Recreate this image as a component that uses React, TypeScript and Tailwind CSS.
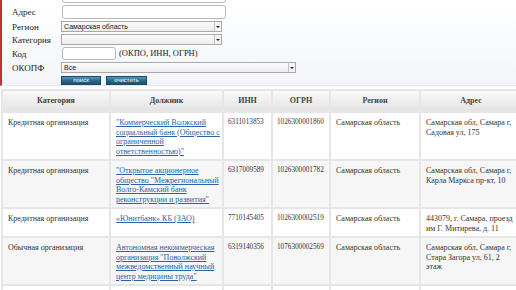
import React from "react";

const serif = "font-['Liberation_Serif','Times_New_Roman',serif]";
const sans = "font-['Liberation_Sans',Arial,sans-serif]";

function Select({ value, width }: { value?: string; width: string }) {
  return (
    <div
      className={`${width} h-[11px] flex items-stretch border border-[#a9a9a9] bg-gradient-to-b from-[#fbfbfb] to-[#ececec]`}
    >
      <div className={`flex-1 pl-[2px] text-[7px] leading-[9px] text-[#222] ${sans}`}>{value}</div>
      <div className="w-[7px] border-l border-[#c4c4c4] bg-[#f4f4f4] flex items-center justify-center">
        <div className="w-0 h-0 border-x-[2px] border-x-transparent border-t-[2px] border-t-[#222]" />
      </div>
    </div>
  );
}

function Label({ children }: { children: React.ReactNode }) {
  return (
    <div className={`w-[51px] pl-[10px] text-[9px] leading-[10px] text-[#222] ${serif}`}>{children}</div>
  );
}

function Button({ children, width }: { children: React.ReactNode; width: string }) {
  return (
    <div
      className={`${width} h-[9px] flex items-center justify-center bg-gradient-to-b from-[#5a97ba] via-[#2d6a8f] to-[#1b4f72] border border-[#1a4868] text-white text-[6px] leading-[6px] ${sans}`}
    >
      {children}
    </div>
  );
}

type Row = {
  cat: string;
  name: string[];
  inn: string;
  ogrn: string;
  region: string;
  addr: string[];
  gray: boolean;
};

const rows: Row[] = [
  {
    cat: "Кредитная организация",
    name: [
      "\"Коммерческий Волжский",
      "социальный банк (Общество с",
      "ограниченной",
      "ответственностью)\"",
    ],
    inn: "6311013853",
    ogrn: "1026300001860",
    region: "Самарская область",
    addr: ["Самарская обл, Самара г,", "Садовая ул, 175"],
    gray: false,
  },
  {
    cat: "Кредитная организация",
    name: [
      "\"Открытое акционерное",
      "общество \"Межрегиональный",
      "Волго-Камский банк",
      "реконструкции и развития\"",
    ],
    inn: "6317009589",
    ogrn: "1026300001782",
    region: "Самарская область",
    addr: ["Самарская обл, Самара г,", "Карла Маркса пр-кт, 10"],
    gray: true,
  },
  {
    cat: "Кредитная организация",
    name: ["«Юнитбанк» КБ (ЗАО)"],
    inn: "7710145405",
    ogrn: "1026300002519",
    region: "Самарская область",
    addr: ["443079, г. Самара, проезд", "им Г. Митирева, д. 11"],
    gray: false,
  },
  {
    cat: "Обычная организация",
    name: [
      "Автономная некоммерческая",
      "организация \"Поволжский",
      "межведомственный научный",
      "центр медицины труда\"",
    ],
    inn: "6319140356",
    ogrn: "1076300002569",
    region: "Самарская область",
    addr: ["Самарская обл, Самара г,", "Стара Загора ул, 61, 2", "этаж"],
    gray: true,
  },
];

const cell = "align-top border-2 border-[#e6e6e6] px-[5px] pt-[5px] pb-[3px]";
const num = "align-top border-2 border-[#e6e6e6] px-[4px] pt-[5px] pb-[3px] text-[7.2px] whitespace-nowrap";
const head =
  "h-[22px] border-2 border-[#e6e6e6] bg-gradient-to-b from-[#f9f9f9] to-[#e3e3e3] text-center font-bold text-[#444]";

export default function App() {
  return (
    <div className="w-[516px] h-[290px] overflow-hidden bg-white">
      <div className="border-l-2 border-[#c83030] bg-gradient-to-b from-white to-[#f2f5f9] border-b border-b-[#e4e8ee] h-[86px] overflow-hidden">
        <div className="flex flex-col gap-[2px] mt-[-11px]">
          <div className="flex items-center h-[14px]">
            <Label>{""}</Label>
            <div className="ml-[9px] w-[164px] h-[14px] rounded-[3px] border border-[#b9b9b9] bg-white" />
          </div>
          <div className="flex items-center h-[14px]">
            <Label>Адрес</Label>
            <div className="ml-[9px] w-[164px] h-[14px] rounded-[3px] border border-[#b9b9b9] bg-white" />
          </div>
          <div className="flex items-center h-[11px]">
            <Label>Регион</Label>
            <div className="ml-[8px]">
              <Select value="Самарская область" width="w-[161px]" />
            </div>
          </div>
          <div className="flex items-center h-[11px]">
            <Label>Категория</Label>
            <div className="ml-[8px]">
              <Select width="w-[161px]" />
            </div>
          </div>
          <div className="flex items-center h-[13px]">
            <Label>Код</Label>
            <div className="ml-[9px] w-[54px] h-[13px] rounded-[3px] border border-[#b9b9b9] bg-white" />
            <div className={`ml-[3px] text-[8.5px] text-[#222] ${serif}`}>(ОКПО, ИНН, ОГРН)</div>
          </div>
          <div className="flex items-center h-[11px]">
            <Label>ОКОПФ</Label>
            <div className="ml-[8px]">
              <Select value="Все" width="w-[235px]" />
            </div>
          </div>
          <div className="flex items-center h-[10px] pl-[59px] gap-[5px]">
            <Button width="w-[40px]">поиск</Button>
            <Button width="w-[41px]">очистить</Button>
          </div>
        </div>
      </div>

      <div className="pt-[3px] pl-[1px]">
        <table className={`table-fixed border-collapse w-[520px] text-[8px] leading-[9.5px] text-[#333] ${serif}`}>
          <colgroup>
            <col className="w-[108px]" />
            <col className="w-[113px]" />
            <col className="w-[49px]" />
            <col className="w-[58px]" />
            <col className="w-[90px]" />
            <col className="w-[102px]" />
          </colgroup>
          <thead>
            <tr>
              <th className={head}>Категория</th>
              <th className={head}>Должник</th>
              <th className={head}>ИНН</th>
              <th className={head}>ОГРН</th>
              <th className={head}>Регион</th>
              <th className={head}>Адрес</th>
            </tr>
          </thead>
          <tbody>
            {rows.map((r) => (
              <tr key={r.inn} className={r.gray ? "bg-[#f6f6f6]" : "bg-white"}>
                <td className={cell}>{r.cat}</td>
                <td className={cell}>
                  {r.name.map((l) => (
                    <span key={l} className="block whitespace-nowrap text-[#2a63a8] underline">
                      {l}
                    </span>
                  ))}
                </td>
                <td className={num}>{r.inn}</td>
                <td className={num}>{r.ogrn}</td>
                <td className={cell}>{r.region}</td>
                <td className={cell}>
                  {r.addr.map((l) => (
                    <span key={l} className="block whitespace-nowrap">
                      {l}
                    </span>
                  ))}
                </td>
              </tr>
            ))}
            <tr className="bg-white">
              <td className={cell}>&nbsp;</td>
              <td className={cell}>&nbsp;</td>
              <td className={cell}>&nbsp;</td>
              <td className={cell}>&nbsp;</td>
              <td className={cell}>&nbsp;</td>
              <td className={cell}>&nbsp;</td>
            </tr>
          </tbody>
        </table>
      </div>
    </div>
  );
}
